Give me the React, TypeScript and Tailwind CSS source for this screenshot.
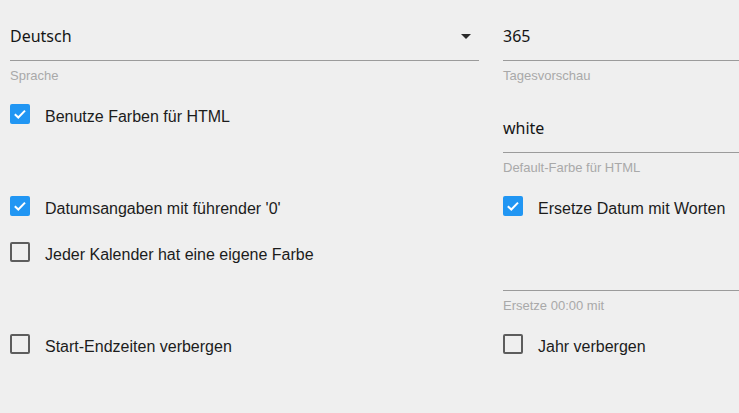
import React from "react";

const sans = { fontFamily: '"Liberation Sans", Arial, sans-serif' };

function Check({ checked, label }: { checked: boolean; label: string }) {
  return (
    <div className="flex h-[44px] items-center gap-[15px]">
      {checked ? (
        <div className="flex h-[20px] w-[20px] items-center justify-center rounded-[2px] bg-[#2196f3]">
          <svg width="20" height="20" viewBox="0 0 20 20">
            <path d="M4.8 10.2 L8.3 13.5 L15 6.6" fill="none" stroke="white" strokeWidth="2" />
          </svg>
        </div>
      ) : (
        <div className="h-[20px] w-[20px] rounded-[2px] border-2 border-[#5d5d5d]" />
      )}
      <span className="pt-[6px] text-[16px] text-[#1c1c1c]" style={sans}>
        {label}
      </span>
    </div>
  );
}

function Field({ value, helper, select }: { value: string; helper: string; select?: boolean }) {
  return (
    <div className="flex h-[92px] flex-col pt-[20px]">
      <div className="flex h-[41px] items-start justify-between border-b border-[#9b9b9b]">
        <span
          className="text-[16px] leading-[32px] text-[#151515]"
          style={{ fontFamily: '"Noto Sans", sans-serif' }}
        >
          {value}
        </span>
        {select && (
          <svg className="mr-[8px] mt-[14px]" width="10" height="5" viewBox="0 0 10 5">
            <path d="M0 0 L10 0 L5 5 Z" fill="#2a2a2a" />
          </svg>
        )}
      </div>
      <div className="mt-[7px] text-[13px] leading-[16px] text-[#a9a9a9]" style={sans}>
        {helper}
      </div>
    </div>
  );
}

export default function App() {
  return (
    <div className="h-[413px] w-[739px] overflow-hidden bg-[#efefef] pl-[10px]">
      <div className="grid w-[962px] grid-cols-[469px_469px] gap-x-[24px]">
        <Field value="Deutsch" helper="Sprache" select />
        <Field value="365" helper="Tagesvorschau" />

        <div className="h-[92px]">
          <Check checked label="Benutze Farben für HTML" />
        </div>
        <Field value="white" helper="Default-Farbe für HTML" />

        <div className="h-[46px]">
          <Check checked label="Datumsangaben mit führender '0'" />
        </div>
        <div className="h-[46px]">
          <Check checked label="Ersetze Datum mit Worten" />
        </div>

        <div className="h-[92px]">
          <Check checked={false} label="Jeder Kalender hat eine eigene Farbe" />
        </div>
        <Field value="" helper="Ersetze 00:00 mit" />

        <div className="h-[46px]">
          <Check checked={false} label="Start-Endzeiten verbergen" />
        </div>
        <div className="h-[46px]">
          <Check checked={false} label="Jahr verbergen" />
        </div>
      </div>
    </div>
  );
}
